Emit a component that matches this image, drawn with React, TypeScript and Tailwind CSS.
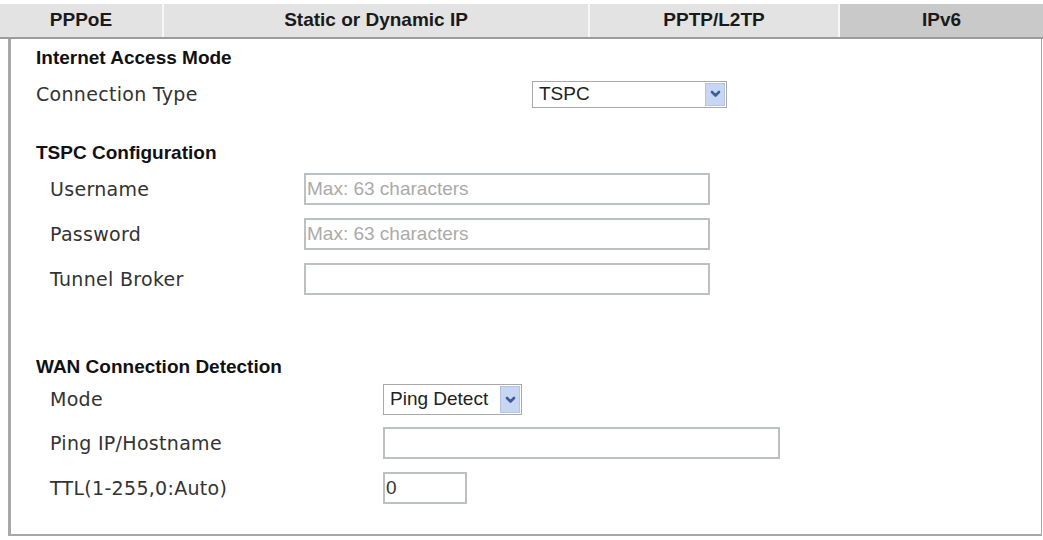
import React from 'react';

const tabs = [
  { name: 'PPPoE', width: 'w-[162px]', active: false },
  { name: 'Static or Dynamic IP', width: 'w-[426px]', active: false },
  { name: 'PPTP/L2TP', width: 'w-[250px]', active: false },
  { name: 'IPv6', width: 'flex-1', active: true },
];

const labelCls = "font-['DejaVu_Sans',Verdana,sans-serif] text-[19px] tracking-[0.3px] text-[#333]";
const headCls = "font-['Liberation_Sans',Arial,sans-serif] font-bold text-[19px] text-[#111] h-[24px] flex items-center";
const fieldFont = "font-['Liberation_Sans',Arial,sans-serif] text-[19px]";

function Chevron() {
  return (
    <svg width="11" height="8" viewBox="0 0 11 8">
      <path d="M2 2 L5.5 5.5 L9 2" fill="none" stroke="#3d5c98" strokeWidth="2.6" strokeLinecap="round" strokeLinejoin="round" />
    </svg>
  );
}

function FakeSelect({ value, className }: { value: string; className: string }) {
  return (
    <div className={`flex border border-[#a9a9a9] bg-white ${className}`}>
      <span className={`flex-1 flex items-center pl-[6px] text-[#222] ${fieldFont}`}>{value}</span>
      <span className="m-px w-[20px] flex items-center justify-center bg-[#c7d7f3] border border-[#b3c4e4]">
        <Chevron />
      </span>
    </div>
  );
}

function TextBox({ className, placeholder, value }: { className: string; placeholder?: string; value?: string }) {
  return (
    <input
      readOnly
      placeholder={placeholder}
      value={value ?? ''}
      className={`h-[32px] border-2 border-[#bcc0c2] bg-white px-[1px] text-[#333] placeholder:text-[#aaaaaa] outline-none ${fieldFont} ${className}`}
    />
  );
}

function Row({ label, labelWidth, children, className }: { label: string; labelWidth: string; children: React.ReactNode; className: string }) {
  return (
    <div className={`flex items-center ${className}`}>
      <div className={`${labelWidth} ${labelCls}`}>{label}</div>
      {children}
    </div>
  );
}

export default function App() {
  return (
    <div className="w-[1043px] h-[540px] bg-white overflow-hidden pt-1">
      {/* Tabs */}
      <div className="flex h-[33px] bg-[#e3e3e3]">
        {tabs.map((t, i) => (
          <div
            key={t.name}
            className={`${t.width} flex items-center justify-center font-['Liberation_Sans',Arial,sans-serif] font-bold text-[19px] text-[#1a1a1a] ${
              i > 0 ? 'border-l-2 border-[#f7f7f7]' : ''
            } ${t.active ? 'bg-[#c9c9c9]' : 'bg-[#e3e3e3]'}`}
          >
            {t.name}
          </div>
        ))}
      </div>
      <div className="h-[2px] bg-[#9c9c9c]" />

      {/* Panel */}
      <div className="ml-2 w-[1034px] h-[497px] border-l-[3px] border-r border-b-2 border-[#a8a8a8] pl-[25px] pt-[7px]">
        <div className={headCls}>Internet Access Mode</div>
        <Row label="Connection Type" labelWidth="w-[496px]" className="mt-[10px] h-[28px]">
          <FakeSelect value="TSPC" className="w-[195px] h-[27px]" />
        </Row>

        <div className={`${headCls} mt-[33px]`}>TSPC Configuration</div>
        <div className="pl-[14px]">
          <Row label="Username" labelWidth="w-[254px]" className="mt-[8px] h-[32px]">
            <TextBox className="w-[406px]" placeholder="Max: 63 characters" />
          </Row>
          <Row label="Password" labelWidth="w-[254px]" className="mt-[13px] h-[32px]">
            <TextBox className="w-[406px]" placeholder="Max: 63 characters" />
          </Row>
          <Row label="Tunnel Broker" labelWidth="w-[254px]" className="mt-[13px] h-[32px]">
            <TextBox className="w-[406px]" />
          </Row>
        </div>

        <div className={`${headCls} mt-[60px]`}>WAN Connection Detection</div>
        <div className="pl-[14px]">
          <Row label="Mode" labelWidth="w-[333px]" className="mt-[5px] h-[31px]">
            <FakeSelect value="Ping Detect" className="w-[139px] h-[31px]" />
          </Row>
          <Row label="Ping IP/Hostname" labelWidth="w-[333px]" className="mt-[12px] h-[32px]">
            <TextBox className="w-[397px]" />
          </Row>
          <Row label="TTL(1-255,0:Auto)" labelWidth="w-[333px]" className="mt-[13px] h-[32px]">
            <TextBox className="w-[84px]" value="0" />
          </Row>
        </div>
      </div>
    </div>
  );
}
